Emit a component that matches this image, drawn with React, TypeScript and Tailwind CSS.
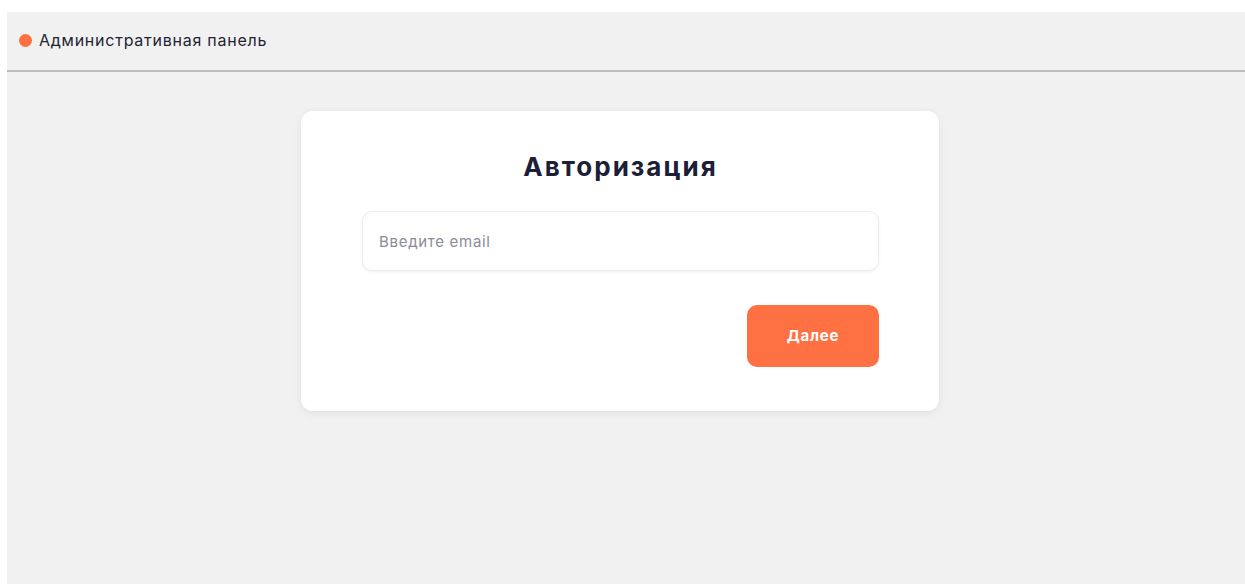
export default function App() {
  return (
    <div className="min-h-[584px] bg-white pl-[7px] pt-[12px] font-['Inter','Noto_Sans',sans-serif]">
      <div className="flex h-[572px] flex-col bg-[#f1f1f1]">
        {/* top bar */}
        <header className="flex h-[60px] shrink-0 items-center gap-[7px] border-b-2 border-[#bcbcbc] pb-[2px] pl-[12px]">
          <span className="h-[13px] w-[13px] rounded-full bg-[#ff6f3f]" />
          <span className="text-[16px] leading-[20px] tracking-[0.75px] text-[#1f2433]">Административная панель</span>
        </header>

        {/* login card */}
        <main className="pl-[294px] pt-[39px]">
          <div className="flex w-[638px] flex-col rounded-[12px] bg-white pb-[44px] pl-[61px] pr-[60px] pt-[40px] shadow-[0_2px_8px_rgba(0,0,0,0.07)]">
            <h1 className="text-center text-[26px] font-bold leading-[32px] tracking-[2px] text-[#1b2038]">Авторизация</h1>
            <input
              type="email"
              placeholder="Введите email"
              className="mt-[28px] h-[60px] w-full rounded-[10px] border border-[#ececec] bg-white px-[16px] text-[15px] tracking-[0.7px] text-[#1b2038] shadow-[0_1px_3px_rgba(0,0,0,0.06)] outline-none placeholder:text-[#8b8b99]"
            />
            <div className="mt-[34px] flex justify-end">
              <button className="h-[62px] w-[132px] rounded-[10px] bg-[#ff7043] text-[15px] font-bold tracking-[0.8px] text-white">
                Далее
              </button>
            </div>
          </div>
        </main>
      </div>
    </div>
  );
}
